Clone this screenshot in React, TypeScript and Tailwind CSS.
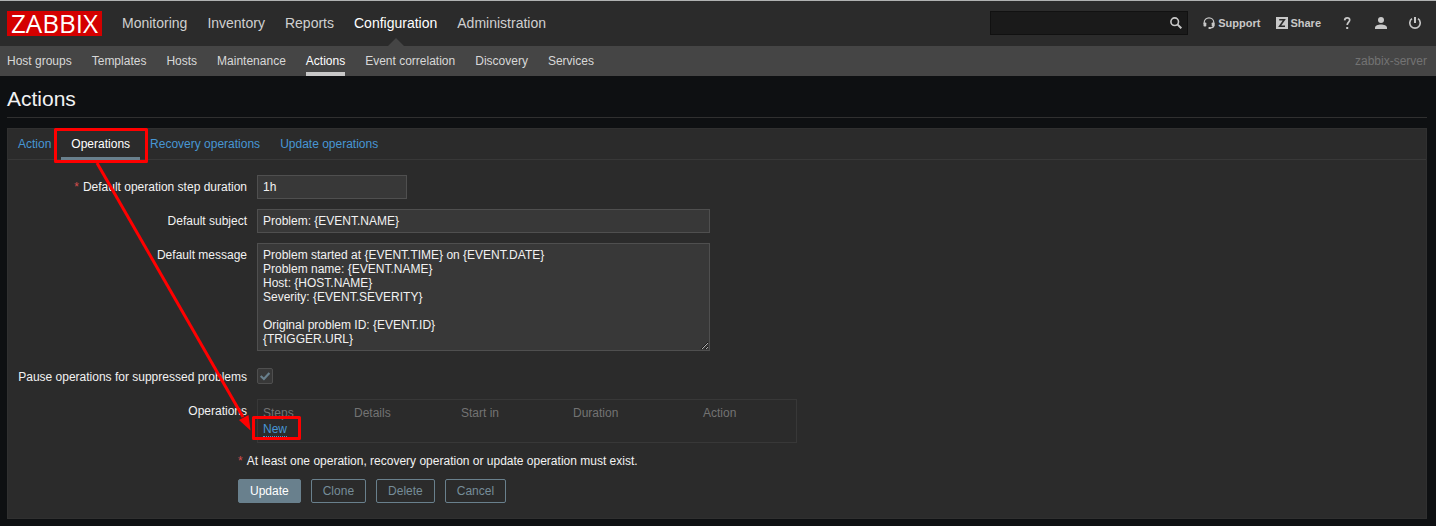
import React from "react";

const mainMenu = ["Monitoring", "Inventory", "Reports", "Configuration", "Administration"];
const subMenu = [
  "Host groups",
  "Templates",
  "Hosts",
  "Maintenance",
  "Actions",
  "Event correlation",
  "Discovery",
  "Services",
];
const tabs = ["Action", "Operations", "Recovery operations", "Update operations"];

const defaultMessage = `Problem started at {EVENT.TIME} on {EVENT.DATE}
Problem name: {EVENT.NAME}
Host: {HOST.NAME}
Severity: {EVENT.SEVERITY}

Original problem ID: {EVENT.ID}
{TRIGGER.URL}`;

function Header() {
  return (
    <header className="flex h-[46px] items-start border-t border-[#b0b2b2] bg-[#2b2b2b] pr-[15px] pl-[7px]">
      <a
        href="#"
        className="mt-[10px] flex h-[25px] w-[95px] items-center justify-center bg-[#d40000] pb-[2px] font-['Open_Sans',sans-serif] text-[26px] leading-6 text-white"
      >
        ZABBIX
      </a>
      <nav className="ml-5 flex h-full gap-5 text-sm">
        {mainMenu.map((item) =>
          item === "Configuration" ? (
            <a key={item} href="#" className="relative flex items-center pb-[2px] text-white">
              {item}
              <svg
                className="absolute bottom-0 left-1/2 -ml-2"
                width="16"
                height="8"
                viewBox="0 0 16 8"
                aria-hidden="true"
              >
                <path d="M0 8 8 0l8 8z" fill="#454545" />
              </svg>
            </a>
          ) : (
            <a key={item} href="#" className="flex items-center pb-[2px] text-[#d0d0d0]">
              {item}
            </a>
          ),
        )}
      </nav>
      <form className="relative mt-[10px] ml-auto w-[198px]" onSubmit={(e) => e.preventDefault()}>
        <input
          type="text"
          aria-label="Search"
          className="block h-6 w-full border border-[#111111] bg-[#1a1a1a] pr-6 pl-1 text-white outline-none"
        />
        <button type="submit" aria-label="Search" className="absolute top-[6px] right-[6px]">
          <svg width="12" height="12" viewBox="0 0 12 12" fill="none" stroke="#c8c8c8" aria-hidden="true">
            <circle cx="4.7" cy="4.7" r="3.8" strokeWidth="1.6" />
            <path d="M7.4 7.4 11.3 11.3" strokeWidth="2" />
          </svg>
        </button>
      </form>
      <div className="mt-[10px] ml-[15px] flex h-6 items-center text-[11px] font-bold text-[#c8c8c8]">
        <a href="#" className="flex items-center gap-[3px]">
          <svg width="12" height="12" viewBox="0 0 12 12" aria-hidden="true">
            <path
              d="M1.2 6.5V5.4a4.8 4.6 0 0 1 9.6 0v2.8c0 1.7-1 2.6-3.4 2.7"
              fill="none"
              stroke="#c8c8c8"
              strokeWidth="1.2"
            />
            <rect x="0.5" y="5.4" width="2.8" height="4.2" rx="0.8" fill="#c8c8c8" />
            <rect x="8.7" y="5.4" width="2.8" height="4.2" rx="0.8" fill="#c8c8c8" />
            <rect x="5.4" y="10" width="2.6" height="2" rx="0.8" fill="#c8c8c8" />
          </svg>
          Support
        </a>
        <a href="#" className="ml-4 flex items-center gap-[2px]">
          <svg width="12" height="12" viewBox="0 0 12 12" aria-hidden="true">
            <rect width="12" height="12" fill="#c8c8c8" />
            <path d="M3.2 2.8H8.3L3.7 9.2H9" fill="none" stroke="#2b2b2b" strokeWidth="1.6" />
          </svg>
          Share
        </a>
        <a href="#" aria-label="Help" className="ml-5">
          <svg width="12" height="12" viewBox="0 0 12 12" aria-hidden="true">
            <path
              d="M3.6 3.3C3.8 1.7 4.8.9 6.2.9c1.5 0 2.5.9 2.5 2.2 0 2-2.5 2.1-2.5 4.9"
              fill="none"
              stroke="#c8c8c8"
              strokeWidth="1.7"
            />
            <rect x="5.2" y="10" width="2" height="2" fill="#c8c8c8" />
          </svg>
        </a>
        <a href="#" aria-label="User profile" className="ml-[22px]">
          <svg width="12" height="12" viewBox="0 0 12 12" fill="#c8c8c8" aria-hidden="true">
            <circle cx="6" cy="3" r="3" />
            <path d="M0 12v-1.3C0 8.6 3.2 7.5 6 7.5s6 1.1 6 3.2V12z" />
          </svg>
        </a>
        <a href="#" aria-label="Sign out" className="ml-[22px]">
          <svg width="12" height="12" viewBox="0 0 12 12" fill="none" stroke="#c8c8c8" aria-hidden="true">
            <path d="M3 1.7A5.2 5.2 0 1 0 9 1.7" strokeWidth="1.6" />
            <path d="M6 0v6" strokeWidth="2" />
          </svg>
        </a>
      </div>
    </header>
  );
}

function SubMenu() {
  return (
    <div className="flex h-[30px] items-stretch justify-between bg-[#454545] pr-[9px] pl-[7px]">
      <nav className="flex gap-5">
        {subMenu.map((item) => (
          <a
            key={item}
            href="#"
            className={
              item === "Actions"
                ? "flex items-center border-y-4 border-t-transparent border-b-[#c8c8c8] text-white"
                : "flex items-center text-[#d8d8d8]"
            }
          >
            {item}
          </a>
        ))}
      </nav>
      <span className="flex items-center text-[#737373]">zabbix-server</span>
    </div>
  );
}

function Required() {
  return <span className="mr-1 text-[#d64e4e]">*</span>;
}

/* Red frames and arrow pointing from the Operations tab to the New link. */
function Annotation() {
  return (
    <svg
      className="pointer-events-none absolute -top-px -left-px"
      width="300"
      height="320"
      viewBox="0 0 300 320"
      fill="none"
      stroke="#ff0000"
      strokeWidth="3"
      strokeLinejoin="round"
      aria-hidden="true"
    >
      <rect x="48.5" y="1.5" width="91" height="32" />
      <rect x="246.5" y="289.5" width="46" height="21" />
      <path d="M90 35 236 289" />
      <path d="M243.5 302.5 232 292 241.5 287z" fill="#ff0000" stroke="none" />
    </svg>
  );
}

const field = "block border border-[#4f4f4f] bg-[#383838] px-[5px] text-[#f2f2f2] outline-none";
const altButton = "h-6 rounded-xs border border-[#69808d] px-[11px] text-[#768d99]";

export default function App() {
  return (
    <div className="flex min-h-screen flex-col bg-[#0e1012] font-['Liberation_Sans',Arial,sans-serif] text-xs text-[#f2f2f2]">
      <Header />
      <SubMenu />
      <main className="pt-[11px] pr-[9px] pb-[7px] pl-[7px]">
        <h1 className="border-b border-[#303030] pb-[6px] text-[21px] leading-6">Actions</h1>
        <section className="relative mt-[10px] border border-[#303030] bg-[#2b2b2b] pb-[15px]">
          <div role="tablist" className="flex h-[31px] border-b border-[#383838]">
            {tabs.map((tab) => (
              <button
                key={tab}
                type="button"
                role="tab"
                aria-selected={tab === "Operations"}
                className={
                  tab === "Operations"
                    ? "h-[31px] border-b-3 border-[#69808d] px-[10px] pt-[2px] text-white"
                    : "h-[30px] px-[10px] text-[#4796d4]"
                }
              >
                {tab}
              </button>
            ))}
          </div>

          <form className="pt-[15px]" onSubmit={(e) => e.preventDefault()}>
            <div className="grid grid-cols-[239px_minmax(0,1fr)] gap-[10px]">
              <label htmlFor="duration" className="text-right leading-6">
                <Required />
                Default operation step duration
              </label>
              <input id="duration" type="text" defaultValue="1h" className={`${field} h-6 w-[150px]`} />

              <label htmlFor="subject" className="text-right leading-6">
                Default subject
              </label>
              <input
                id="subject"
                type="text"
                defaultValue="Problem: {EVENT.NAME}"
                className={`${field} h-6 w-full max-w-[453px]`}
              />

              <label htmlFor="message" className="text-right leading-6">
                Default message
              </label>
              <textarea
                id="message"
                rows={7}
                defaultValue={defaultMessage}
                className={`${field} w-full max-w-[453px] resize overflow-auto py-1 leading-[14px]`}
              />

              <label htmlFor="pause" className="pt-1 text-right leading-6">
                Pause operations for suppressed problems
              </label>
              <div className="relative h-7 pt-[7px]">
                <input
                  id="pause"
                  type="checkbox"
                  defaultChecked
                  className="peer block h-4 w-4 appearance-none rounded-xs border border-[#4f4f4f] bg-[#383838]"
                />
                <svg
                  className="pointer-events-none absolute top-[7px] left-0 hidden peer-checked:block"
                  width="16"
                  height="16"
                  viewBox="0 0 16 16"
                  fill="none"
                  aria-hidden="true"
                >
                  <path d="M3.7 8 6.9 11 12.4 5" stroke="#69808d" strokeWidth="2.2" />
                </svg>
              </div>

              <div className="text-right leading-6">Operations</div>
              <div className="w-full max-w-[540px] border border-[#383838] py-[5px]">
                <table className="w-full table-fixed text-left leading-4">
                  <colgroup>
                    <col className="w-[91px]" />
                    <col className="w-[107px]" />
                    <col className="w-[112px]" />
                    <col className="w-[130px]" />
                    <col />
                  </colgroup>
                  <thead>
                    <tr className="text-[#737373]">
                      {["Steps", "Details", "Start in", "Duration", "Action"].map((head) => (
                        <th key={head} scope="col" className="px-[5px] font-normal">
                          {head}
                        </th>
                      ))}
                    </tr>
                  </thead>
                  <tbody>
                    <tr>
                      <td colSpan={5} className="px-[5px] pt-[2px]">
                        <a
                          href="#"
                          className="block w-fit border-b border-dotted border-[#4796d4] leading-[13px] text-[#4796d4]"
                        >
                          New
                        </a>
                      </td>
                    </tr>
                  </tbody>
                </table>
              </div>
            </div>

            <div className="mt-[6px] pl-[230px]">
              <p className="leading-6">
                <Required />
                At least one operation, recovery operation or update operation must exist.
              </p>
              <div className="mt-[6px] flex gap-[10px]">
                <button
                  type="submit"
                  className="h-6 rounded-xs border border-[#69808d] bg-[#69808d] px-[11px] text-white"
                >
                  Update
                </button>
                <button type="button" className={altButton}>
                  Clone
                </button>
                <button type="button" className={altButton}>
                  Delete
                </button>
                <button type="button" className={altButton}>
                  Cancel
                </button>
              </div>
            </div>
          </form>
          <Annotation />
        </section>
      </main>
    </div>
  );
}
